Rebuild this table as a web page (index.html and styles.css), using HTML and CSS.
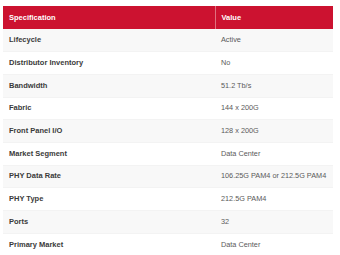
FILE: index.html
```html
<!DOCTYPE html>
<html>
<head>
<meta charset="utf-8">
<link rel="stylesheet" href="styles.css">
</head>
<body>
<div class="wrap">
<table class="spec">
<thead>
<tr><th class="c1">Specification</th><th class="c2">Value</th></tr>
</thead>
<tbody>
<tr><td class="k">Lifecycle</td><td class="v">Active</td></tr>
<tr><td class="k">Distributor Inventory</td><td class="v">No</td></tr>
<tr><td class="k">Bandwidth</td><td class="v">51.2 Tb/s</td></tr>
<tr><td class="k">Fabric</td><td class="v">144 x 200G</td></tr>
<tr><td class="k">Front Panel I/O</td><td class="v">128 x 200G</td></tr>
<tr><td class="k">Market Segment</td><td class="v">Data Center</td></tr>
<tr><td class="k">PHY Data Rate</td><td class="v">106.25G PAM4 or 212.5G PAM4</td></tr>
<tr><td class="k">PHY Type</td><td class="v">212.5G PAM4</td></tr>
<tr><td class="k">Ports</td><td class="v">32</td></tr>
<tr><td class="k">Primary Market</td><td class="v">Data Center</td></tr>
</tbody>
</table>
</div>
</body>
</html>
```
FILE: styles.css
```css
html, body {
  margin: 0;
  padding: 0;
  background: #ffffff;
}
.wrap {
  padding: 6px 7px 0 3px;
}
.spec {
  width: 330px;
  border-collapse: collapse;
  table-layout: fixed;
  font-family: "Liberation Sans", Arial, sans-serif;
  font-size: 7.5px;
  line-height: 10px;
}
.spec th {
  background: #cc1230;
  color: #ffffff;
  font-weight: bold;
  text-align: left;
  height: 23px;
  padding: 0 6px;
  box-sizing: border-box;
}
.spec th.c1 {
  width: 212px;
}
.spec th.c2 {
  border-left: 1px solid #e0707f;
}
.spec td {
  height: 22.7px;
  padding: 0 6px;
  box-sizing: border-box;
  border-bottom: 1px solid #f3f3f3;
  white-space: nowrap;
}
.spec tbody tr:nth-child(odd) td {
  background: #f8f8f8;
}
.spec td.k {
  font-weight: bold;
  color: #3a3a3a;
}
.spec td.v {
  color: #5a5a5a;
  font-size: 7.3px;
  padding: 0 2px 0 6px;
}
```
